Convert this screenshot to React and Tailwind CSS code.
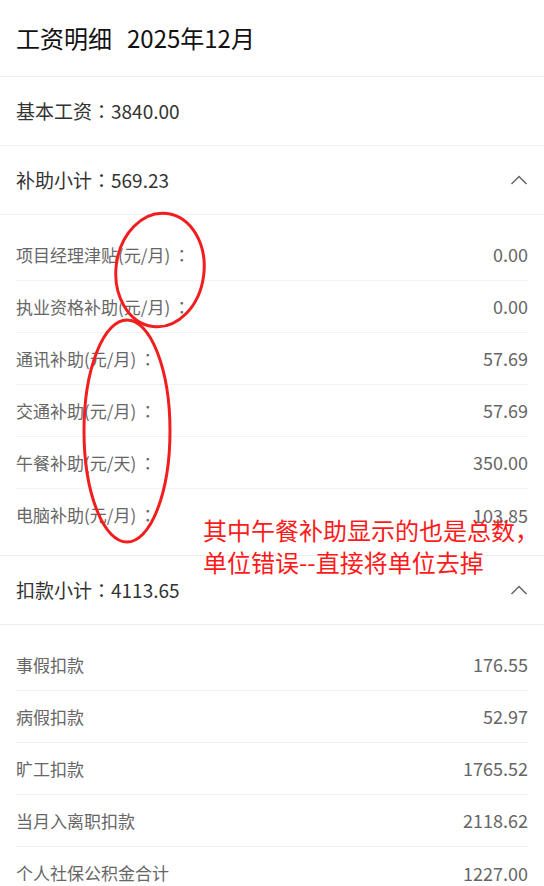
const FONT = { fontFamily: '"Noto Sans CJK SC", "Noto Sans", sans-serif' };

const allowances = [
  { label: '项目经理津贴(元/月)', value: '0.00' },
  { label: '执业资格补助(元/月)', value: '0.00' },
  { label: '通讯补助(元/月)', value: '57.69' },
  { label: '交通补助(元/月)', value: '57.69' },
  { label: '午餐补助(元/天)', value: '350.00' },
  { label: '电脑补助(元/月)', value: '103.85' },
];

const deductions = [
  { label: '事假扣款', value: '176.55' },
  { label: '病假扣款', value: '52.97' },
  { label: '旷工扣款', value: '1765.52' },
  { label: '当月入离职扣款', value: '2118.62' },
  { label: '个人社保公积金合计', value: '1227.00' },
];

// centred full-width colon, as the source font draws it
function Colon() {
  return <span className="font-['Noto_Sans_CJK_TC']">：</span>;
}

function ChevronUp() {
  return (
    <svg width="18" height="10" viewBox="0 0 18 10" fill="none">
      <path d="M1.5 9 L9 1.5 L16.5 9" stroke="#666" strokeWidth="1.5" />
    </svg>
  );
}

function SectionHeader({ label, amount, collapsible }) {
  return (
    <div className="flex h-[69px] items-center justify-between border-b border-[#efefef] px-4">
      <span className="text-[19px] text-[#333]">
        {label}
        <Colon />
        {amount}
      </span>
      {collapsible && <ChevronUp />}
    </div>
  );
}

function ItemList({ items, colon }) {
  return (
    <div className="border-b border-[#efefef] px-4 py-[14px]">
      {items.map((item, idx) => (
        <div
          key={idx}
          className={
            'flex h-[52px] items-center justify-between text-[17px] text-[#666] ' +
            (idx < items.length - 1 ? 'border-b border-[#f2f2f2]' : '')
          }
        >
          <span>
            {item.label}
            {colon && <span className="ml-[3px]"><Colon /></span>}
          </span>
          <span className="text-[18px]">{item.value}</span>
        </div>
      ))}
    </div>
  );
}

export default function App() {
  return (
    <div className="relative h-[886px] w-[544px] overflow-hidden bg-white" style={FONT}>
      <div className="flex h-[77px] items-center border-b border-[#efefef] px-4">
        <h1 className="text-[24px] text-[#111]">
          工资明细<span className="ml-[15px]">2025年12月</span>
        </h1>
      </div>
      <SectionHeader label="基本工资" amount="3840.00" />
      <SectionHeader label="补助小计" amount="569.23" collapsible />
      <ItemList items={allowances} colon />
      <SectionHeader label="扣款小计" amount="4113.65" collapsible />
      <ItemList items={deductions} />

      {/* review annotations */}
      <svg className="pointer-events-none absolute left-0 top-0" width="544" height="886">
        <ellipse cx="160" cy="270" rx="44" ry="57" transform="rotate(7 160 270)" fill="none" stroke="#f21d1d" strokeWidth="3" />
        <ellipse cx="127" cy="431" rx="43" ry="111" fill="none" stroke="#f21d1d" strokeWidth="3" />
      </svg>
      <div className="absolute left-[203px] top-[514px] text-[24px] leading-[32px] text-[#ff1a1a]">
        <div>其中午餐补助显示的也是总数，</div>
        <div>单位错误--直接将单位去掉</div>
      </div>
    </div>
  );
}
